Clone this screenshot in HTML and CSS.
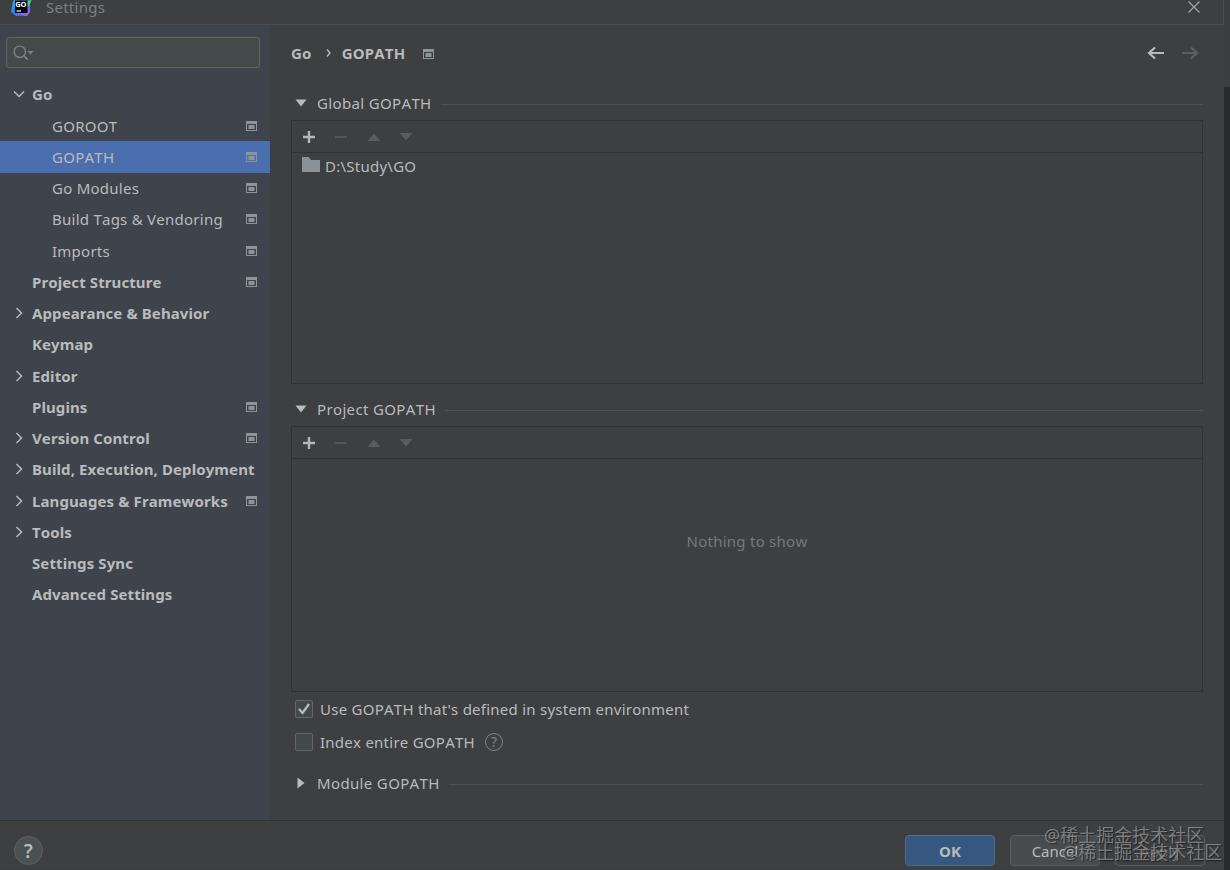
FILE: index.html
```html
<!DOCTYPE html>
<html lang="en">
<head>
  <meta charset="UTF-8">
  <title>Settings</title>
  <link rel="stylesheet" href="styles.css">
</head>
<body>
  <svg class="symbols">
    <symbol id="project" viewBox="0 0 11 10">
      <path d="M0 0h11v10H0zM1 3v6h9V3z" fill="currentColor" fill-rule="evenodd"/>
      <rect x="2.5" y="4" width="6" height="4" fill="currentColor"/>
    </symbol>
    <symbol id="chevron" viewBox="0 0 12 12">
      <path d="M3.5 1l5 5-5 5" fill="none" stroke="currentColor" stroke-width="1.5"/>
    </symbol>
    <symbol id="plus" viewBox="0 0 14 14">
      <path d="M7 1v12M1 7h12" stroke="currentColor" stroke-width="2.4"/>
    </symbol>
    <symbol id="minus" viewBox="0 0 14 14">
      <path d="M1 7h12" stroke="currentColor" stroke-width="1.6"/>
    </symbol>
    <symbol id="up" viewBox="0 0 14 14">
      <path d="M7 3.5l6.5 7.5H.5z" fill="currentColor"/>
    </symbol>
    <symbol id="down" viewBox="0 0 14 14">
      <path d="M7 10.5L.5 3h13z" fill="currentColor"/>
    </symbol>
    <symbol id="fold" viewBox="0 0 12 12">
      <path d="M.5 2.5h11L6 9.5z" fill="currentColor"/>
    </symbol>
    <symbol id="arrow" viewBox="0 0 18 14">
      <path d="M17 7H2M8 1.5L2 7l6 5.5" fill="none" stroke="currentColor" stroke-width="2.2"/>
    </symbol>
  </svg>

  <div class="window">
    <header class="titlebar">
      <svg class="logo" width="22" height="20" viewBox="0 0 22 20">
        <defs>
          <linearGradient id="go" x1="0" y1="0" x2="1" y2="1">
            <stop offset="0" stop-color="#25b4e8"/>
            <stop offset=".5" stop-color="#2f7df0"/>
            <stop offset="1" stop-color="#b45cf0"/>
          </linearGradient>
        </defs>
        <path d="M3 4l3-2h11l3 5v8l-3 4-7-.5-4 .5-5-4z" fill="url(#go)"/>
        <path d="M16 4l5.500-1-2.500 6-3-1z" fill="#42db91"/>
        <rect x="5" y="3.500" width="12.500" height="12.500" fill="#050507"/>
        <text x="5.200" y="10">GO</text>
        <path d="M6.500 14h4.500" stroke="#fff" stroke-width="1.200"/>
      </svg>
      <span class="title">Settings</span>
      <svg class="close" width="12" height="12" viewBox="0 0 12 12"><path d="M.5.500l11 11M11.500.500l-11 11" stroke="currentColor" stroke-width="1.200"/></svg>
    </header>

    <div class="content">
      <aside class="sidebar">
        <div class="search">
          <svg width="21" height="16" viewBox="0 0 21 16">
            <circle cx="6.800" cy="6.800" r="5.700" fill="none" stroke="currentColor" stroke-width="1.400"/>
            <path d="M10.800 10.800l4 4" stroke="currentColor" stroke-width="1.600"/>
            <path d="M14.500 6h6l-3 3.600z" fill="currentColor"/>
          </svg>
        </div>
        <ul class="tree">
          <li class="group open"><svg class="chevron"><use href="#chevron"/></svg><span>Go</span></li>
          <li class="child"><span>GOROOT</span><svg class="project"><use href="#project"/></svg></li>
          <li class="child selected"><span>GOPATH</span><svg class="project"><use href="#project"/></svg></li>
          <li class="child"><span>Go Modules</span><svg class="project"><use href="#project"/></svg></li>
          <li class="child"><span>Build Tags &amp; Vendoring</span><svg class="project"><use href="#project"/></svg></li>
          <li class="child"><span>Imports</span><svg class="project"><use href="#project"/></svg></li>
          <li class="group"><span>Project Structure</span><svg class="project"><use href="#project"/></svg></li>
          <li class="group"><svg class="chevron"><use href="#chevron"/></svg><span>Appearance &amp; Behavior</span></li>
          <li class="group"><span>Keymap</span></li>
          <li class="group"><svg class="chevron"><use href="#chevron"/></svg><span>Editor</span></li>
          <li class="group"><span>Plugins</span><svg class="project"><use href="#project"/></svg></li>
          <li class="group"><svg class="chevron"><use href="#chevron"/></svg><span>Version Control</span><svg class="project"><use href="#project"/></svg></li>
          <li class="group"><svg class="chevron"><use href="#chevron"/></svg><span>Build, Execution, Deployment</span></li>
          <li class="group"><svg class="chevron"><use href="#chevron"/></svg><span>Languages &amp; Frameworks</span><svg class="project"><use href="#project"/></svg></li>
          <li class="group"><svg class="chevron"><use href="#chevron"/></svg><span>Tools</span></li>
          <li class="group"><span>Settings Sync</span></li>
          <li class="group"><span>Advanced Settings</span></li>
        </ul>
      </aside>

      <main class="main">
        <div class="breadcrumb">
          <span>Go</span>
          <svg class="separator" width="5" height="8" viewBox="0 0 5 8"><path d="M1 .5L4 4 1 7.500" fill="none" stroke="currentColor" stroke-width="1.400"/></svg>
          <span>GOPATH</span>
          <svg class="project"><use href="#project"/></svg>
          <div class="history">
            <svg class="arrow"><use href="#arrow"/></svg>
            <svg class="arrow forward"><use href="#arrow"/></svg>
          </div>
        </div>

        <h2 class="section"><svg class="fold"><use href="#fold"/></svg>Global GOPATH</h2>
        <div class="panel global">
          <div class="toolbar">
            <svg class="enabled"><use href="#plus"/></svg>
            <svg><use href="#minus"/></svg>
            <svg><use href="#up"/></svg>
            <svg><use href="#down"/></svg>
          </div>
          <div class="path">
            <svg width="18" height="15" viewBox="0 0 18 15"><path d="M0 0h6.500l2.500 3h9v12H0z" fill="#8b9397"/></svg>
            <span>D:\Study\GO</span>
          </div>
        </div>

        <h2 class="section second"><svg class="fold"><use href="#fold"/></svg>Project GOPATH</h2>
        <div class="panel project-panel">
          <div class="toolbar">
            <svg class="enabled"><use href="#plus"/></svg>
            <svg><use href="#minus"/></svg>
            <svg><use href="#up"/></svg>
            <svg><use href="#down"/></svg>
          </div>
          <div class="empty">Nothing to show</div>
        </div>

        <div class="option">
          <span class="checkbox"><svg width="14" height="14" viewBox="0 0 14 14"><path d="M2 7l3.500 4L12 2" fill="none" stroke="#b9bcbe" stroke-width="2.200"/></svg></span>
          <span>Use GOPATH that's defined in system environment</span>
        </div>
        <div class="option index">
          <span class="checkbox"></span>
          <span>Index entire GOPATH</span>
          <span class="hint">?</span>
        </div>

        <h2 class="section third"><svg class="fold closed"><use href="#fold"/></svg>Module GOPATH</h2>
      </main>
    </div>

    <footer class="footer">
      <button class="help">?</button>
      <button class="btn primary">OK</button>
      <button class="btn">Cancel</button>
      <button class="btn apply">Apply</button>
    </footer>
  </div>
  <div class="edge"></div>
  <div class="watermark">@稀土掘金技术社区</div>
  <div class="watermark lower">@稀土掘金技术社区</div>
</body>
</html>
```
FILE: styles.css
```css
* {
  box-sizing: border-box;
}

body {
  display: flex;
  height: 870px;
  margin: 0;
  overflow: hidden;
  position: relative;
  background-color: #3c3f41;
  color: #b9bbbd;
  font-family: "Noto Sans", "Open Sans", sans-serif;
  font-size: 15px;
  font-kerning: none;
  letter-spacing: 0.25px;
}

svg {
  display: block;
  flex-shrink: 0;
}

.symbols {
  display: none;
}

.window {
  width: 1224px;
  height: 869px;
  display: flex;
  flex-direction: column;
  background-color: #3d3f41;
}

/* title bar */
.titlebar {
  height: 25px;
  display: flex;
  align-items: flex-start;
  padding-left: 10px;
  padding-right: 23px;
  border-bottom: 1px solid #4b4d4f;
  border-right: 1px solid #4b4d4f;
}

.logo {
  margin-top: -3px;
}

.logo text {
  font-size: 7.5px;
  font-weight: bold;
  letter-spacing: 0;
  fill: #fff;
}

.title {
  margin-left: 14px;
  line-height: 15px;
  color: #7d7f81;
}

.close {
  margin-left: auto;
  margin-top: 1px;
  color: #a3a5a7;
}

.content {
  height: 795px;
  display: flex;
}

/* left side */
.sidebar {
  width: 270px;
  background-color: #3e434c;
}

.search {
  width: 254px;
  height: 31px;
  margin: 12px 0 0 6px;
  padding: 7px 6px;
  background-color: #444a4a;
  border: 1px solid #626766;
  border-radius: 3px;
  color: #7d8386;
}

.tree {
  list-style-type: none;
  margin: 10.8px 0 0;
  padding: 0;
}

.tree li {
  height: 31.25px;
  display: flex;
  align-items: center;
  padding-left: 32px;
  padding-right: 13px;
  white-space: nowrap;
}

.tree .child {
  padding-left: 52px;
}

.tree .group {
  font-weight: bold;
  letter-spacing: 0.1px;
}

.tree .selected {
  background-color: #4b6eaf;
}

.chevron {
  width: 12px;
  height: 12px;
  margin-left: -19px;
  margin-right: 7px;
}

.open .chevron {
  transform: rotate(90deg);
}

.project {
  width: 11px;
  height: 10px;
  color: #8e9599;
}

.tree .project {
  margin-left: auto;
}

/* right side */
.main {
  flex: 1;
  padding: 15px 21px 0 21px;
}

.breadcrumb {
  height: 26px;
  display: flex;
  align-items: center;
  font-weight: bold;
  letter-spacing: 0.2px;
}

.separator {
  margin: 0 11px 0 14px;
}

.breadcrumb .project {
  margin-left: 18px;
  margin-top: 1px;
}

.history {
  display: flex;
  gap: 16px;
  margin-left: auto;
  margin-right: 4px;
}

.arrow {
  width: 18px;
  height: 14px;
  color: #b9bbbd;
}

.forward {
  transform: scaleX(-1);
  color: #5d5f61;
}

.section {
  height: 26px;
  display: flex;
  align-items: center;
  margin: 24px 0 4px;
  padding-left: 4px;
  font-size: 15px;
  font-weight: normal;
  letter-spacing: 0.35px;
}

.section::after {
  content: "";
  flex: 1;
  height: 1px;
  margin-left: 9px;
  margin-top: 2px;
  background-color: #4e5052;
}

.second {
  margin: 12px 0 4px;
}

.third {
  margin: 15px 0 0;
}

.fold {
  width: 12px;
  height: 12px;
  margin-right: 10px;
}

.closed {
  transform: rotate(-90deg);
}

.panel {
  width: 912px;
  border: 1px solid #303234;
}

.global {
  height: 264px;
}

.project-panel {
  height: 266px;
}

.toolbar {
  height: 32px;
  display: flex;
  align-items: center;
  gap: 18.4px;
  padding-left: 10px;
  border-bottom: 1px solid #303234;
}

.toolbar svg {
  width: 14px;
  height: 14px;
  color: #595b5d;
}

.toolbar .enabled {
  color: #b4b6b8;
}

.path {
  display: flex;
  align-items: center;
  height: 26px;
  padding-left: 10px;
}

.path svg {
  margin-right: 5px;
  margin-top: -3px;
}

.empty {
  padding-top: 70px;
  line-height: 24px;
  text-align: center;
  color: #77797b;
}

.option {
  height: 26px;
  display: flex;
  align-items: center;
  margin-top: 4px;
  padding-left: 4px;
}

.index {
  margin-top: 7px;
}

.checkbox {
  width: 18px;
  height: 18px;
  margin-right: 7px;
  padding: 1px;
  background-color: #43494a;
  border: 1px solid #63676a;
  border-radius: 2px;
}

.hint {
  width: 18px;
  height: 18px;
  margin-left: 10px;
  border: 1.5px solid #7e8588;
  border-radius: 50%;
  color: #7e8588;
  font-size: 14px;
  line-height: 16px;
  letter-spacing: 0;
  text-align: center;
}

/* buttons */
.footer {
  height: 49px;
  display: flex;
  align-items: flex-start;
  padding: 14px 19px 0 14px;
  border-top: 1px solid #303234;
}

button {
  font-family: inherit;
  color: inherit;
  padding: 0;
}

.help {
  width: 29px;
  height: 29px;
  margin-right: auto;
  margin-top: 1px;
  background-color: #4b5052;
  border: 1px solid #5e6264;
  border-radius: 50%;
  font-size: 19px;
  font-weight: 600;
  line-height: 26px;
}

.btn {
  width: 90px;
  height: 31px;
  margin-left: 15px;
  background-color: #484c4e;
  border: 1px solid #5b5f61;
  border-radius: 4px;
  font-size: 15px;
}

.primary {
  background-color: #365880;
  border-color: #4c708c;
  font-weight: bold;
}

.apply {
  background-color: #3d3f41;
  color: #77797b;
}

/* strip of the window behind */
.edge {
  flex: 1;
  margin-top: 87px;
  background-color: #292a2b;
}

.watermark {
  position: absolute;
  left: 1044px;
  top: 822px;
  font-family: "Noto Sans", "Noto Sans CJK SC", sans-serif;
  font-size: 18px;
  line-height: 26px;
  letter-spacing: 0;
  white-space: nowrap;
  color: rgba(190, 190, 190, 0.55);
  text-shadow: 1px 1px 1px rgba(0, 0, 0, 0.5);
}

.lower {
  left: 1062px;
  top: 839px;
}
```
